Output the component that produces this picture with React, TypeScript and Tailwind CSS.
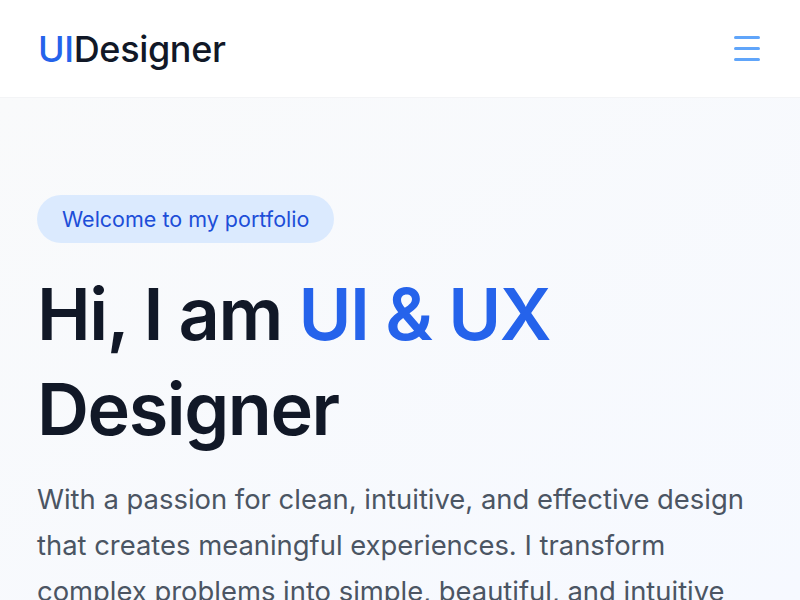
import React from "react";

export default function App() {
  return (
    <div className="min-h-screen w-full bg-white" style={{ fontFamily: "Inter, 'Noto Sans', sans-serif" }}>
      <header className="flex h-[98px] items-center justify-between border-b border-[#f3f4f6] bg-white px-[38px]">
        <div className="text-[36px] font-medium leading-none tracking-[-0.01em] text-[#111827]">
          <span className="text-[#2563eb]">UI</span>Designer
        </div>
        <button className="flex h-[40px] w-[40px] flex-col items-end justify-center gap-[8px] pr-[2px]">
          <span className="block h-[3px] w-[26px] rounded-full bg-[#60a5fa]" />
          <span className="block h-[3px] w-[26px] rounded-full bg-[#60a5fa]" />
          <span className="block h-[3px] w-[26px] rounded-full bg-[#60a5fa]" />
        </button>
      </header>
      <main className="h-[502px] overflow-hidden bg-gradient-to-br from-[#f9fafb] to-[#f6f9ff] px-[37px] pt-[97px]">
        <div className="inline-flex h-[48px] items-center rounded-full bg-[#dbeafe] px-[25px] text-[21.5px] font-normal text-[#1d4ed8]">
          Welcome to my portfolio
        </div>
        <h1 className="mt-[23px] text-[72px] font-semibold leading-[95px] tracking-[-0.02em] text-[#111827]">
          Hi, I am <span className="text-[#2563eb]">UI &amp; UX</span>
          <br />
          Designer
        </h1>
        <p className="mt-[20px] max-w-[730px] text-[27.4px] leading-[46px] text-[#4b5563]">
          With a passion for clean, intuitive, and effective design that creates meaningful experiences. I transform complex problems into simple, beautiful, and intuitive designs.
        </p>
      </main>
    </div>
  );
}
